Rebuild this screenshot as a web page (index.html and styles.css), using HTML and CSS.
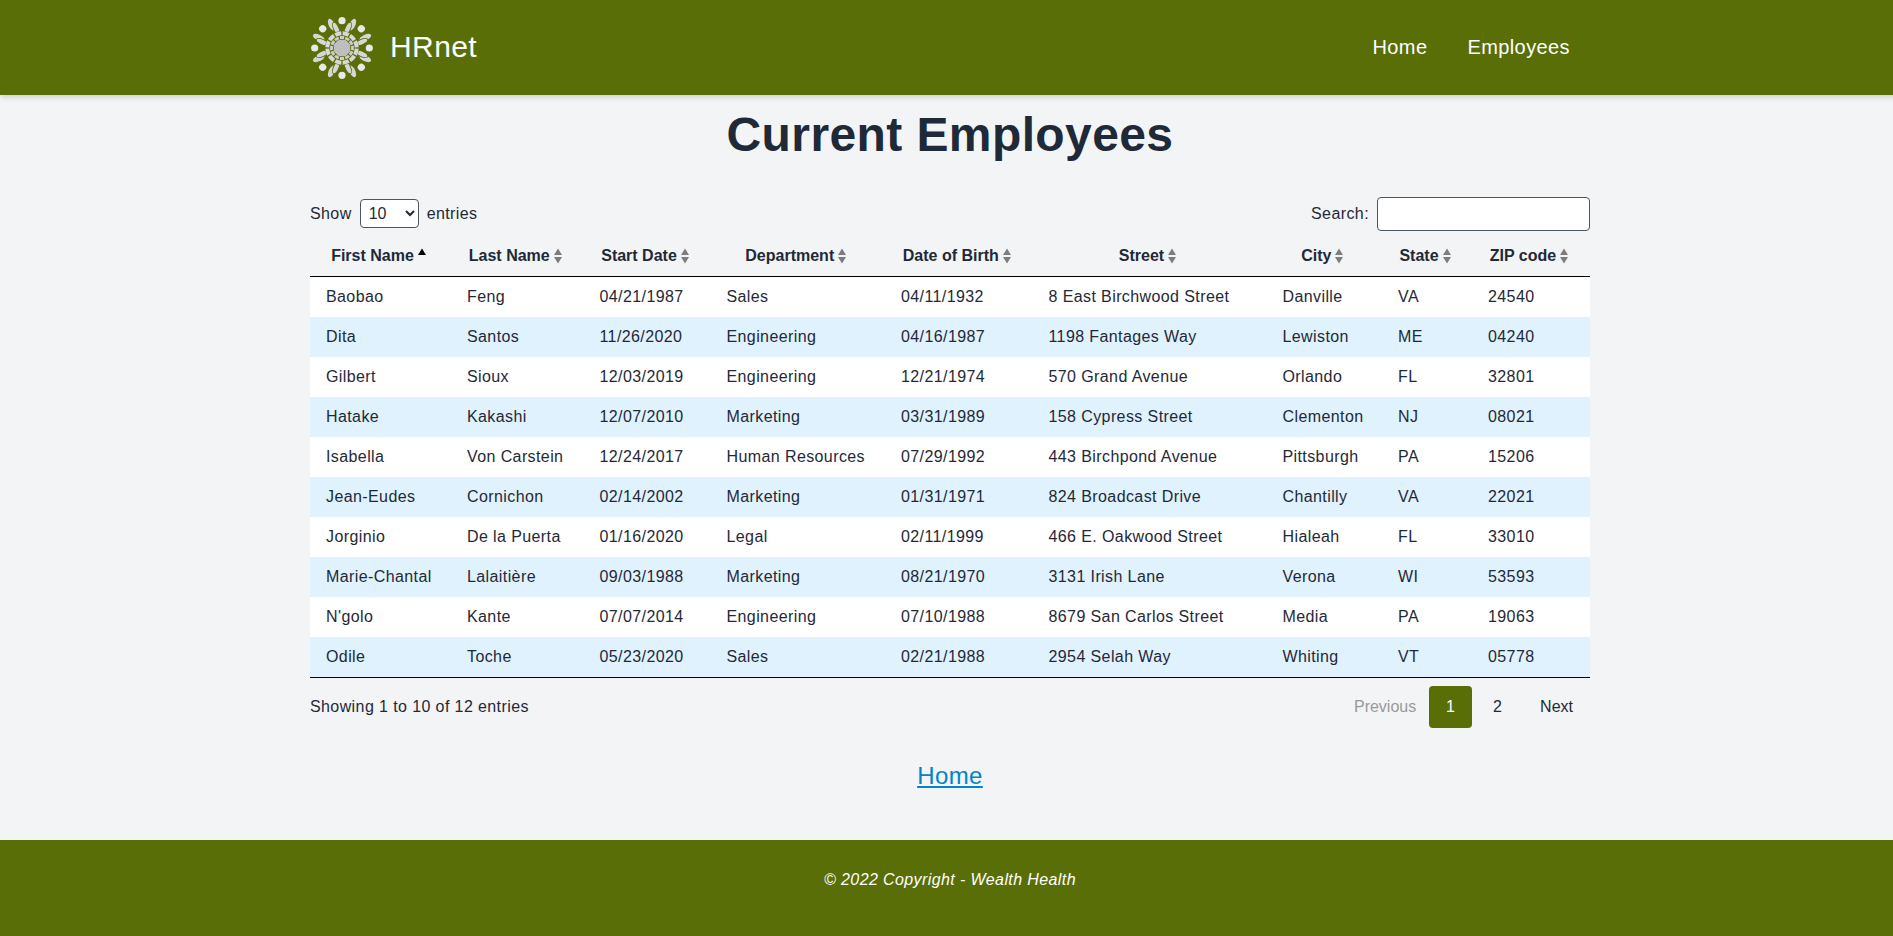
FILE: index.html
```html
<!DOCTYPE html>
<html lang="en">
<head>
<meta charset="utf-8">
<title>HRnet - Current Employees</title>
<link rel="stylesheet" href="styles.css">
</head>
<body>
<svg width="0" height="0" class="defs" aria-hidden="true">
  <symbol id="both" viewBox="0 0 8 16"><path d="M4 .5 8 7H0zM4 15.5 8 9H0z"/></symbol>
  <symbol id="asc" viewBox="0 0 8 16"><path d="M4 .5 8 7H0z"/></symbol>
</svg>
<header class="header">
  <div class="container bar">
    <a class="brand">
      <svg class="logo" viewBox="-32 -32 64 64">
        <defs>
          <g id="leaf" fill="#d6d6d6">
            <ellipse rx="2.900" ry="6.300" transform="translate(-10.400 -23.300) rotate(-25)"/>
            <ellipse rx="2.700" ry="6.600" transform="translate(-5.900 -19.600) rotate(-24)" stroke="#596e07" stroke-width=".9"/>
          </g>
          <g id="quarter">
            <circle cy="-27.300" r="3.600" fill="#e8e8e8"/>
            <circle cy="-27.300" r="3.600" fill="#e8e8e8" transform="rotate(45)"/>
            <use href="#leaf"/><use href="#leaf" transform="scale(-1 1)"/>
          </g>
        </defs>
        <use href="#quarter"/><use href="#quarter" transform="rotate(90)"/><use href="#quarter" transform="rotate(180)"/><use href="#quarter" transform="rotate(270)"/>
        <circle r="13" fill="none" stroke="#596e07" stroke-width="8"/>
        <circle r="14.700" fill="none" stroke="#d8d8d8" stroke-width="4" pathLength="120" stroke-dasharray="8.200 1.800" stroke-dashoffset="-.9"/>
        <circle r="10.500" fill="none" stroke="#cecece" stroke-width="2.800" pathLength="120" stroke-dasharray="8 2" stroke-dashoffset="4"/>
        <path fill="#bebebe" d="M-3.400-8.200H3.400L8.200-3.400V3.400L3.400 8.200H-3.400L-8.200 3.400V-3.400z"/>
      </svg>
      <span class="brand-name">HRnet</span>
    </a>
    <nav class="nav"><a>Home</a><a>Employees</a></nav>
  </div>
</header>
<main class="container main">
  <h1 class="title">Current Employees</h1>
  <div class="controls">
    <label class="length">Show <select class="select"><option>10</option><option>25</option></select> entries</label>
    <label class="search">Search: <input class="input" type="text"></label>
  </div>
  <table class="table">
    <colgroup><col class="c1"><col class="c2"><col class="c3"><col class="c4"><col class="c5"><col class="c6"><col class="c7"><col class="c8"><col class="c9"></colgroup>
    <thead><tr>
      <th>First Name<svg class="sort on"><use href="#asc"/></svg></th>
      <th>Last Name<svg class="sort"><use href="#both"/></svg></th>
      <th>Start Date<svg class="sort"><use href="#both"/></svg></th>
      <th>Department<svg class="sort"><use href="#both"/></svg></th>
      <th>Date of Birth<svg class="sort"><use href="#both"/></svg></th>
      <th>Street<svg class="sort"><use href="#both"/></svg></th>
      <th>City<svg class="sort"><use href="#both"/></svg></th>
      <th>State<svg class="sort"><use href="#both"/></svg></th>
      <th>ZIP code<svg class="sort"><use href="#both"/></svg></th>
    </tr></thead>
    <tbody>
      <tr><td>Baobao</td><td>Feng</td><td>04/21/1987</td><td>Sales</td><td>04/11/1932</td><td>8 East Birchwood Street</td><td>Danville</td><td>VA</td><td>24540</td></tr>
      <tr><td>Dita</td><td>Santos</td><td>11/26/2020</td><td>Engineering</td><td>04/16/1987</td><td>1198 Fantages Way</td><td>Lewiston</td><td>ME</td><td>04240</td></tr>
      <tr><td>Gilbert</td><td>Sioux</td><td>12/03/2019</td><td>Engineering</td><td>12/21/1974</td><td>570 Grand Avenue</td><td>Orlando</td><td>FL</td><td>32801</td></tr>
      <tr><td>Hatake</td><td>Kakashi</td><td>12/07/2010</td><td>Marketing</td><td>03/31/1989</td><td>158 Cypress Street</td><td>Clementon</td><td>NJ</td><td>08021</td></tr>
      <tr><td>Isabella</td><td>Von Carstein</td><td>12/24/2017</td><td>Human Resources</td><td>07/29/1992</td><td>443 Birchpond Avenue</td><td>Pittsburgh</td><td>PA</td><td>15206</td></tr>
      <tr><td>Jean-Eudes</td><td>Cornichon</td><td>02/14/2002</td><td>Marketing</td><td>01/31/1971</td><td>824 Broadcast Drive</td><td>Chantilly</td><td>VA</td><td>22021</td></tr>
      <tr><td>Jorginio</td><td>De la Puerta</td><td>01/16/2020</td><td>Legal</td><td>02/11/1999</td><td>466 E. Oakwood Street</td><td>Hialeah</td><td>FL</td><td>33010</td></tr>
      <tr><td>Marie-Chantal</td><td>Lalaitière</td><td>09/03/1988</td><td>Marketing</td><td>08/21/1970</td><td>3131 Irish Lane</td><td>Verona</td><td>WI</td><td>53593</td></tr>
      <tr><td>N'golo</td><td>Kante</td><td>07/07/2014</td><td>Engineering</td><td>07/10/1988</td><td>8679 San Carlos Street</td><td>Media</td><td>PA</td><td>19063</td></tr>
      <tr><td>Odile</td><td>Toche</td><td>05/23/2020</td><td>Sales</td><td>02/21/1988</td><td>2954 Selah Way</td><td>Whiting</td><td>VT</td><td>05778</td></tr>
    </tbody>
  </table>
  <div class="table-footer">
    <div>Showing 1 to 10 of 12 entries</div>
    <div class="pages"><a class="page disabled">Previous</a><a class="page current">1</a><a class="page">2</a><a class="page">Next</a></div>
  </div>
  <div class="back"><a class="home-link">Home</a></div>
</main>
<footer class="footer"><p class="copyright">© 2022 Copyright - Wealth Health</p></footer>
</body>
</html>
```
FILE: styles.css
```css
* { box-sizing: border-box; }
html { overflow: hidden; }
body {
  margin: 0;
  width: 1900px;
  height: 936px;
  display: flex;
  flex-direction: column;
  background: #f3f4f6;
  color: #1f2937;
  font: 16px/24px "Liberation Sans", Arial, sans-serif;
  letter-spacing: 0.4px;
}
.defs { display: block; height: 0; flex: none; }
.container { width: 1280px; margin: 0 auto; }
.header {
  height: 95px;
  flex: none;
  background: #596e07;
  color: #fff;
  box-shadow: 0 4px 6px -1px rgba(0,0,0,.1), 0 2px 4px -1px rgba(0,0,0,.06);
}
.bar { height: 95px; display: flex; align-items: center; justify-content: space-between; }
.brand { display: flex; align-items: center; gap: 16px; }
.logo { width: 64px; height: 64px; }
.brand-name { font-size: 30px; line-height: 36px; padding-bottom: 2px; }
.nav { display: flex; gap: 40px; padding: 0 20px 1px 0; font-size: 20px; line-height: 28px; }
.main { flex: 1; display: flex; flex-direction: column; }
.title { margin: 16px 0 37px; font-size: 48px; line-height: 48px; text-align: center; }
.controls { height: 35px; display: flex; justify-content: space-between; align-items: center; }
.length, .search { display: flex; align-items: center; gap: 8px; }
.select, .input {
  border: 1px solid #4b5563;
  border-radius: 4px;
  background: #fff;
  color: #1f2937;
  font: 16px "Liberation Sans", Arial, sans-serif;
}
.select { width: 59px; height: 29px; padding: 4px; }
.input { width: 213px; height: 34px; }
.table { width: 1280px; table-layout: fixed; border-spacing: 0; border-bottom: 1px solid #000; }
.c1 { width: 141px; }
.c2 { width: 132.5px; }
.c3 { width: 127px; }
.c4 { width: 174.5px; }
.c5 { width: 147.5px; }
.c6 { width: 234px; }
.c7 { width: 115.5px; }
.c8 { width: 90px; }
.c9 { width: 118px; }
.table th { height: 46px; padding: 6px 4px 1px 0; border-bottom: 1px solid #000; white-space: nowrap; text-align: center; letter-spacing: 0; }
.table td { height: 40px; padding: 0 16px; white-space: nowrap; }
.table tbody tr:nth-child(odd) { background: #fff; }
.table tbody tr:nth-child(even) { background: #e0f2fe; }
.sort { width: 8px; height: 16px; margin-left: 4px; vertical-align: -3px; fill: #7d7d7d; }
.sort.on { fill: #000; }
.table-footer { display: flex; justify-content: space-between; align-items: center; height: 42px; margin-top: 8px; }
.pages { display: flex; gap: 4.2px; letter-spacing: 0; }
.page { height: 42px; padding: 0 17px; line-height: 42px; border-radius: 4px; }
.disabled { color: #999; padding-right: 8.5px; }
.current { background: #596e07; color: #fff; }
.back { margin-top: 32px; text-align: center; }
.home-link { font-size: 24px; line-height: 32px; color: #0284c7; text-decoration: underline; }
.footer { height: 96px; flex: none; background: #596e07; color: #fff; text-align: center; }
.copyright { margin: 28px 0 0; font-style: italic; }
```
